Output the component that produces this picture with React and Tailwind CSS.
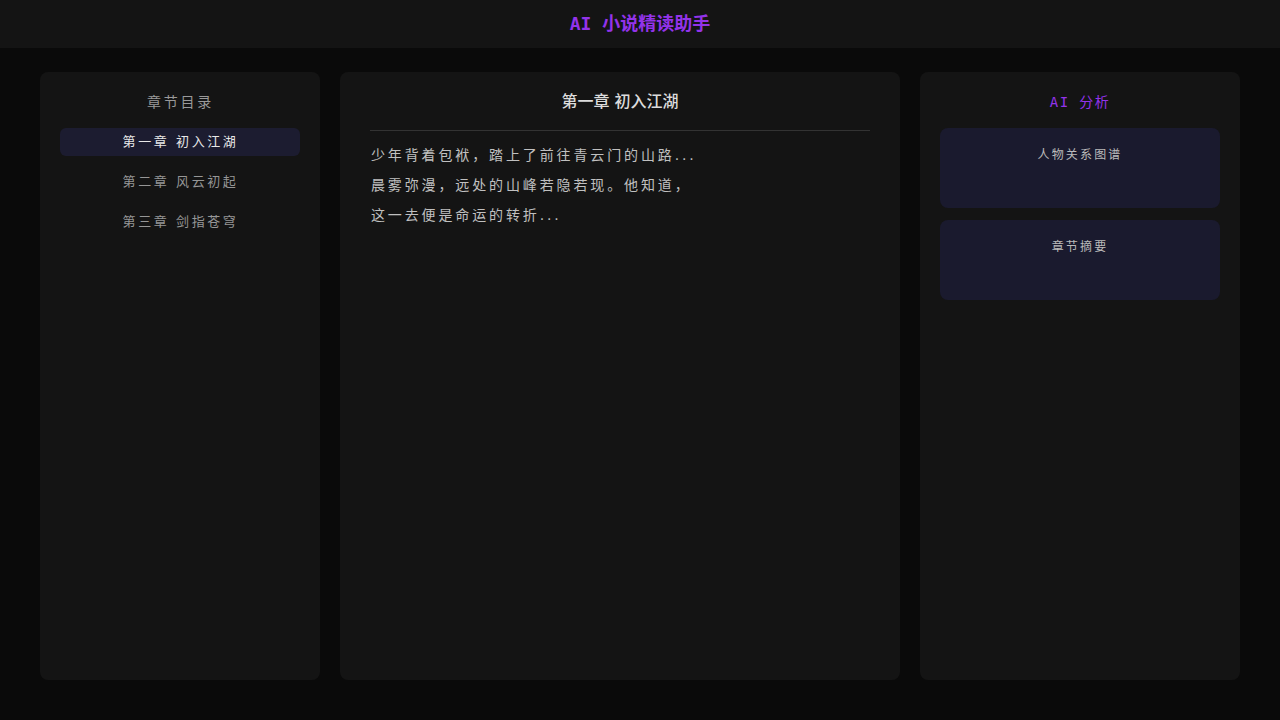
const chapters = ["第一章 初入江湖", "第二章 风云初起", "第三章 剑指苍穹"];

const lines = [
  "少年背着包袱，踏上了前往青云门的山路...",
  "晨雾弥漫，远处的山峰若隐若现。他知道，",
  "这一去便是命运的转折...",
];

const sans = "font-['DejaVu_Sans','Noto_Sans_CJK_SC',sans-serif]";
const mono = "font-['DejaVu_Sans_Mono','Noto_Sans_CJK_SC',monospace]";

export default function App() {
  return (
    <div className={`h-screen flex flex-col bg-[#0a0a0a] ${sans}`}>
      {/* Header */}
      <header className="h-12 shrink-0 bg-[#141414] flex items-center justify-center pb-px">
        <h1 className={`${mono} text-[18px] font-bold text-[#9333ea]`}>AI 小说精读助手</h1>
      </header>

      <main className="flex-1 flex gap-5 px-10 pt-6 pb-10 min-h-0">
        {/* Chapter list */}
        <aside className="w-[280px] shrink-0 bg-[#141414] rounded-lg px-5 pt-5">
          <h2 className="text-center text-sm leading-5 tracking-[0.2em] text-[#999] mb-4 pl-px">章节目录</h2>
          <ul className="flex flex-col gap-3">
            {chapters.map((c, i) => (
              <li
                key={c}
                className={`h-7 flex items-center justify-center rounded-md text-[13px] tracking-[0.2em] pl-px ${
                  i === 0 ? "bg-[#1c1c30] text-[#e8e8e8]" : "text-[#969696]"
                }`}
              >
                {c}
              </li>
            ))}
          </ul>
        </aside>

        {/* Reader */}
        <section className="flex-1 bg-[#141414] rounded-lg px-[30px] pt-5">
          <h2 className="text-center text-base font-medium leading-5 text-[#dcdcdc] pb-[18px] border-b border-[#333]">
            第一章 初入江湖
          </h2>
          <div className="mt-[9px] pl-px text-sm leading-[30px] tracking-[0.205em] text-[#c0c0c0]">
            {lines.map((l) => (
              <p key={l}>{l}</p>
            ))}
          </div>
        </section>

        {/* AI panel */}
        <aside className="w-[320px] shrink-0 bg-[#141414] rounded-lg px-5 pt-5">
          <h2 className={`${mono} text-center text-sm leading-5 tracking-[0.1em] text-[#9333ea] mb-4`}>AI 分析</h2>
          <div className="flex flex-col gap-3">
            <div className="h-20 rounded-lg bg-[#1a1a2e] pt-[19px] text-center text-xs leading-4 tracking-[0.18em] text-[#bbb]">
              人物关系图谱
            </div>
            <div className="h-20 rounded-lg bg-[#1a1a2e] pt-[19px] text-center text-xs leading-4 tracking-[0.18em] text-[#bbb]">
              章节摘要
            </div>
          </div>
        </aside>
      </main>
    </div>
  );
}
